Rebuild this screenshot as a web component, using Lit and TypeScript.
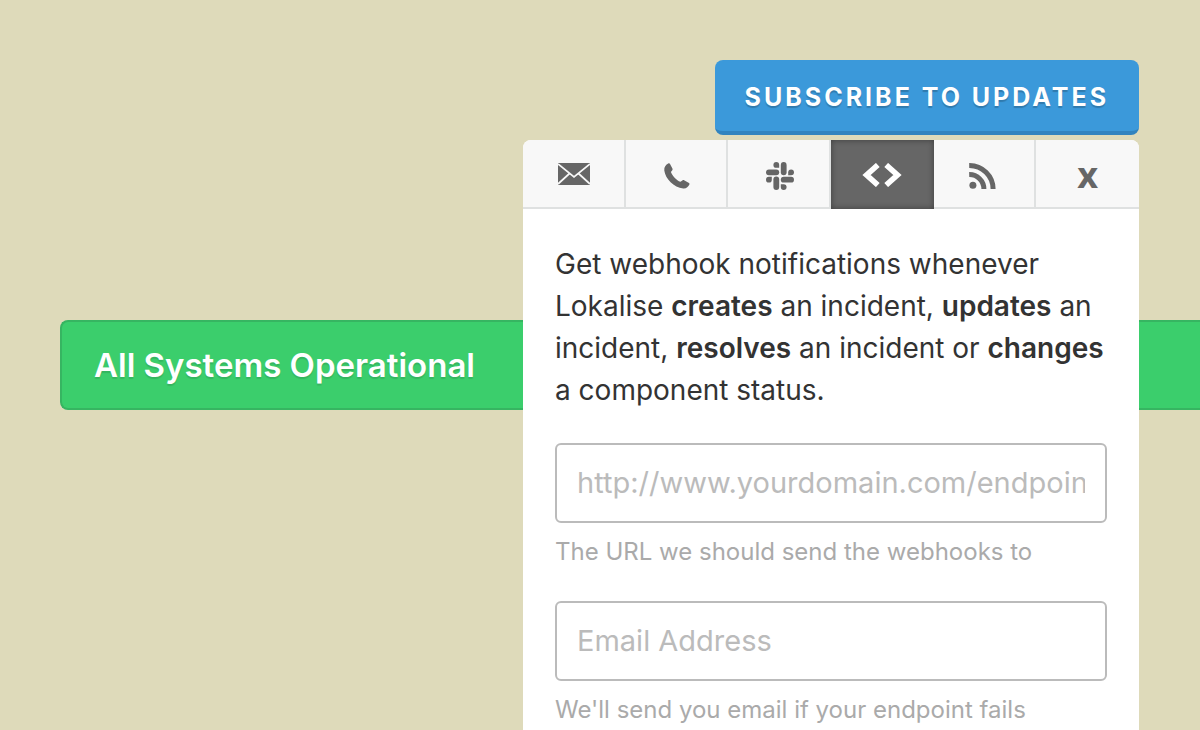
import { LitElement, html, css, svg } from "lit";
import { customElement, state } from "lit/decorators.js";
import { classMap } from "lit/directives/class-map.js";

const icons: Record<string, unknown> = {
  email: svg`<svg class="icon" width="32" height="22" viewBox="0 0 32 22" aria-hidden="true">
    <rect width="32" height="22" fill="currentColor"/>
    <path d="M0 1L16 14L32 1M0 21L11.5 10.5M32 21L20.5 10.5" fill="none" stroke="#f8f8f8" stroke-width="1.7"/>
  </svg>`,
  phone: svg`<svg class="icon phone" width="26" height="26" viewBox="0 0 26 26" aria-hidden="true">
    <path fill="currentColor" d="M4.6 0.3C5.1 0 5.6 0.2 5.9 0.8L8.4 5.6C8.8 6.3 8.6 6.9 8.1 7.4L6.9 8.9C8 12.4 12.6 17.4 16.4 18.8L18.4 17.4C19 17 19.6 17 20.1 17.3L25 20.1C25.6 20.5 25.7 21 25.4 21.6C24.2 24.2 22.2 25.8 19.2 25.5C9.9 24.4 1.3 15.6 0.3 7.4C0 4.2 1.6 1.7 4.6 0.3Z"/>
  </svg>`,
  slack: svg`<svg class="icon slack" width="28" height="28" viewBox="0 0 28 28" aria-hidden="true">
    <g fill="currentColor">
      <rect x="7.4" y="14.6" width="5.8" height="13.4" rx="2.9"/>
      <rect x="14.8" y="0" width="5.8" height="13.2" rx="2.9"/>
      <rect x="0" y="7.4" width="13.2" height="5.8" rx="2.9"/>
      <rect x="14.8" y="14.8" width="13.2" height="5.8" rx="2.9"/>
      <path d="M13.2 5.8H10.3A2.9 2.9 0 1 1 13.2 2.9Z"/>
      <path d="M22.2 13.2V10.3A2.9 2.9 0 1 1 25.1 13.2Z"/>
      <path d="M14.8 22.2H17.7A2.9 2.9 0 1 1 14.8 25.1Z"/>
      <path d="M5.8 14.8V17.7A2.9 2.9 0 1 1 2.9 14.8Z"/>
    </g>
  </svg>`,
  webhook: svg`<svg class="icon" width="40" height="24" viewBox="0 0 40 24" aria-hidden="true">
    <path d="M15.8 2L4.6 12L15.8 22M24.2 2L35.4 12L24.2 22" fill="none" stroke="currentColor" stroke-width="5.6"/>
  </svg>`,
  rss: svg`<svg class="icon rss" width="27" height="26" viewBox="0 0 27 26" aria-hidden="true">
    <circle cx="3.9" cy="22.3" r="3.5" fill="currentColor"/>
    <path d="M0.2 11.6A14.4 14.4 0 0 1 14.9 26M0.2 2.5A23.7 23.7 0 0 1 24.1 26" fill="none" stroke="currentColor" stroke-width="5"/>
  </svg>`,
  close: "x",
};

const tabs = [
  ["email", "Subscribe via email"],
  ["phone", "Subscribe via text message"],
  ["slack", "Subscribe via Slack"],
  ["webhook", "Subscribe via webhook"],
  ["rss", "Subscribe via RSS"],
  ["close", "Close subscribe form"],
];

@customElement("app-root")
export class AppRoot extends LitElement {
  @state() private active = "webhook";

  static styles = css`
    :host {
      display: block;
      min-height: 100vh;
      overflow: hidden;
      box-sizing: border-box;
      padding: 60px 0 0 60px;
      background: #dedaba;
      color: #333;
      font-family: Inter, "Liberation Sans", sans-serif;
    }
    * { box-sizing: border-box; }
    .header {
      display: flex;
      justify-content: flex-end;
      padding-right: 61px;
      margin-bottom: 185px;
    }
    .subscribe { position: relative; }
    .subscribe-button {
      display: block;
      height: 75px;
      padding: 2px 30px 0;
      border: 0;
      border-bottom: 4px solid #3183bf;
      border-radius: 8px;
      background: #3b99da;
      color: #fff;
      font: 700 25px/68px Inter, sans-serif;
      letter-spacing: 3px;
      text-transform: uppercase;
      text-shadow: 0 2px 1px rgba(0, 0, 0, 0.2);
      white-space: nowrap;
    }
    .popover {
      position: absolute;
      top: 80px;
      right: 0;
      width: 616px;
      border-radius: 8px 8px 0 0;
      overflow: hidden;
      background: #fff;
    }
    .tabs {
      display: grid;
      grid-template-columns: repeat(6, 1fr);
      height: 69px;
    }
    .tab {
      display: grid;
      place-items: center;
      padding: 0 0 0 2px;
      border: 0 solid #dfe1e1;
      border-width: 0 2px 2px 0;
      background: #f8f8f8;
      color: #666;
    }
    .tab.active + .tab { padding: 0 2px 0 0; }
    .tab:last-child {
      border-right: 0;
      padding: 2px 0 0;
      font: 700 36px/48px "Open Sans", sans-serif;
    }
    .tab.active {
      padding: 0;
      border: 0;
      background: #666;
      color: #fff;
      box-shadow: inset 0 0 6px rgba(0, 0, 0, 0.4);
    }
    .icon { display: block; }
    .phone, .slack, .rss { margin-top: 4px; }
    .form { padding: 34px 32px 32px; }
    .intro { margin: 0 0 32px; font-size: 28px; line-height: 42px; }
    .intro strong { font-weight: 600; }
    .field { margin-bottom: 32px; }
    .input {
      display: block;
      width: 100%;
      height: 80px;
      padding: 0 20px 2px;
      border: 2px solid #bbb;
      border-radius: 6px;
      outline: 0;
      background: #fff;
      font: 29px Inter, sans-serif;
      color: #333;
    }
    .input::placeholder { color: #bbb; opacity: 1; }
    .help {
      display: block;
      padding-top: 12px;
      color: #aaa;
      font-size: 24px;
      line-height: 34px;
    }
    .status {
      height: 90px;
      padding: 0 32px;
      border: 2px solid #36b561;
      border-right: 0;
      border-radius: 8px 0 0 8px;
      background: #3bce6c;
      color: #fff;
      font: 600 33px/86px Inter, sans-serif;
      text-shadow: 0 2px 1px rgba(0, 0, 0, 0.12);
    }
  `;

  render() {
    return html`
      <header class="header">
        <div class="subscribe">
          <button class="subscribe-button" type="button">Subscribe to updates</button>
          <div class="popover">
            <div class="tabs">
              ${tabs.map(([id, label]) => html`
                <button
                  type="button"
                  class=${classMap({ tab: true, active: this.active === id })}
                  aria-label=${label}
                  @click=${() => (this.active = id)}
                >${icons[id]}</button>
              `)}
            </div>
            <form class="form">
              <p class="intro">
                Get webhook notifications whenever Lokalise <strong>creates</strong> an
                incident, <strong>updates</strong> an incident, <strong>resolves</strong> an
                incident or <strong>changes</strong> a component status.
              </p>
              <div class="field">
                <input class="input" id="endpoint" type="url" placeholder="http://www.yourdomain.com/endpoint" />
                <label class="help" for="endpoint">The URL we should send the webhooks to</label>
              </div>
              <div class="field">
                <input class="input" id="email" type="email" placeholder="Email Address" />
                <label class="help" for="email">We'll send you email if your endpoint fails</label>
              </div>
            </form>
          </div>
        </div>
      </header>
      <main class="status">All Systems Operational</main>
    `;
  }
}
